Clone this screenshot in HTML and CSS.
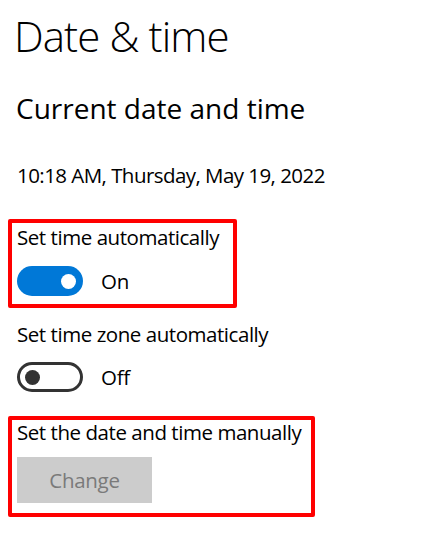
FILE: index.html
```html
<!DOCTYPE html>
<html lang="en">
<head>
<meta charset="utf-8">
<title>Date &amp; time</title>
<link rel="stylesheet" href="styles.css">
</head>
<body>
<main class="page">
  <h1 class="title">Date &amp; time</h1>
  <h2 class="subtitle">Current date and time</h2>
  <p class="now">10:18 AM, Thursday, May 19, 2022</p>

  <section class="highlight first">
    <div class="label">Set time automatically</div>
    <div class="toggle-row">
      <span class="toggle on"><span class="knob"></span></span>
      <span class="state">On</span>
    </div>
  </section>

  <section class="plain">
    <div class="label">Set time zone automatically</div>
    <div class="toggle-row">
      <span class="toggle off"><span class="knob"></span></span>
      <span class="state">Off</span>
    </div>
  </section>

  <section class="highlight second">
    <div class="label tight">Set the date and time manually</div>
    <button class="change" type="button" disabled>Change</button>
  </section>
</main>
</body>
</html>
```

FILE: styles.css
```css
html, body {
  margin: 0;
  padding: 0;
  background: #ffffff;
}

body {
  font-family: "Open Sans", "Noto Sans", "DejaVu Sans", sans-serif;
  color: #000000;
  width: 437px;
  height: 538px;
  overflow: hidden;
}

.page {
  padding: 8px 0 0 8px;
}

.title {
  margin: 0;
  padding-left: 6px;
  font-size: 42px;
  font-weight: 300;
  line-height: 56px;
  letter-spacing: -0.9px;
  white-space: nowrap;
}

.subtitle {
  margin: 24px 0 0;
  padding-left: 8px;
  font-size: 28px;
  font-weight: 400;
  line-height: 40px;
  letter-spacing: 0;
  white-space: nowrap;
}

.now {
  margin: 32px 0 0;
  padding-left: 9px;
  font-size: 20.5px;
  line-height: 30px;
  letter-spacing: -0.55px;
  white-space: nowrap;
}

.label {
  font-size: 20.5px;
  line-height: 28px;
  letter-spacing: -0.45px;
  white-space: nowrap;
}

.label.tight {
  line-height: 24px;
}

.highlight {
  border: 4px solid #ff0000;
  border-radius: 2px;
  padding: 0 0 0 5px;
  box-sizing: border-box;
}

.highlight.first {
  margin-top: 29px;
  width: 229px;
  padding-bottom: 8px;
}

.highlight.second {
  margin-top: 24px;
  width: 307px;
  padding-bottom: 10px;
}

.plain {
  margin-top: 12px;
  padding-left: 9px;
}

.toggle-row {
  display: flex;
  align-items: center;
  gap: 18px;
  margin-top: 15px;
  height: 30px;
}

.plain .toggle-row {
  margin-top: 14px;
}

.toggle {
  position: relative;
  display: block;
  width: 66px;
  height: 30px;
  border-radius: 15px;
  box-sizing: border-box;
}

.toggle.on {
  background: #0078d7;
}

.toggle.off {
  background: #ffffff;
  border: 3px solid #333333;
}

.knob {
  position: absolute;
  top: 50%;
  width: 15px;
  height: 15px;
  margin-top: -7.5px;
  border-radius: 50%;
}

.toggle.on .knob {
  right: 7px;
  background: #ffffff;
}

.toggle.off .knob {
  left: 5px;
  background: #333333;
}

.state {
  font-size: 20.5px;
  line-height: 30px;
  letter-spacing: -0.3px;
}

.change {
  display: block;
  margin-top: 13px;
  width: 135px;
  height: 46px;
  border: none;
  border-radius: 0;
  background: #cccccc;
  color: #7a7a7a;
  font-family: inherit;
  font-size: 20.5px;
  letter-spacing: -0.3px;
  padding: 0;
}
```
